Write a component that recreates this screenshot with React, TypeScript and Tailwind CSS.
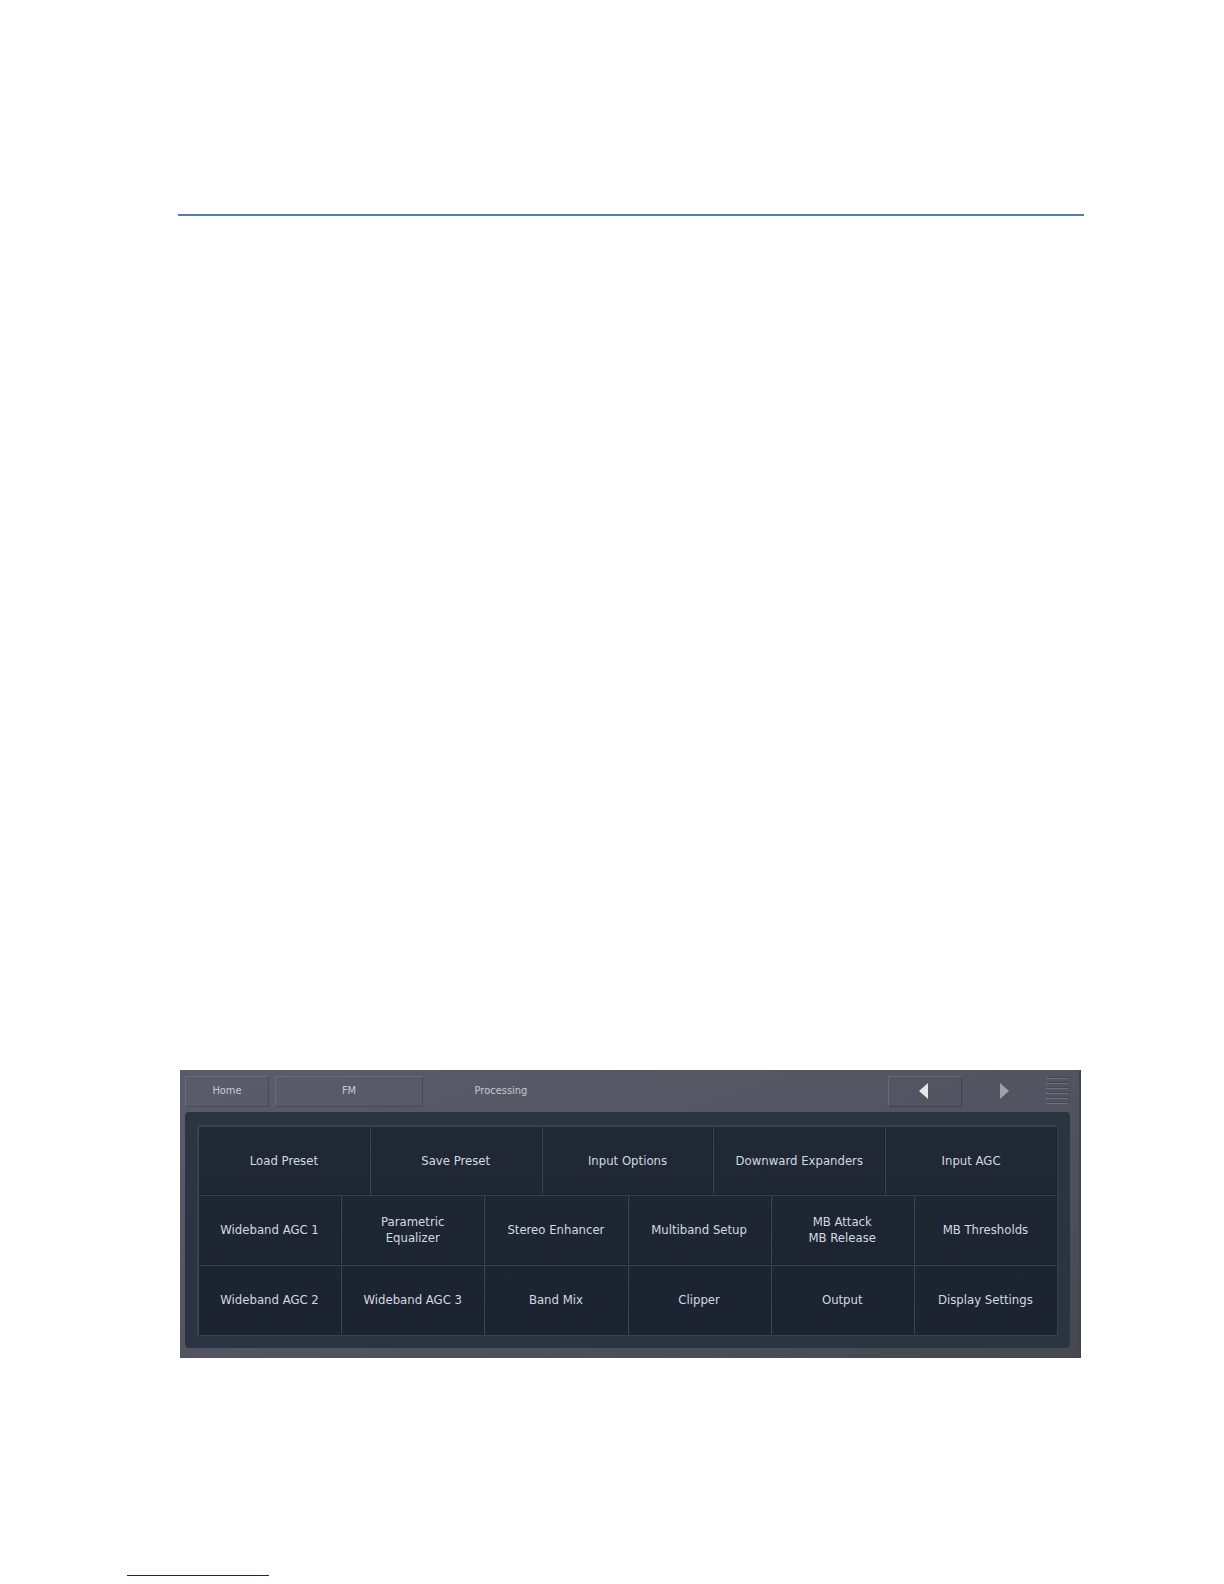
const presetRow = ['Load Preset', 'Save Preset', 'Input Options', 'Downward Expanders', 'Input AGC']

const stageRows = [
  ['Wideband AGC 1', 'Parametric\nEqualizer', 'Stereo Enhancer', 'Multiband Setup', 'MB Attack\nMB Release', 'MB Thresholds'],
  ['Wideband AGC 2', 'Wideband AGC 3', 'Band Mix', 'Clipper', 'Output', 'Display Settings'],
]

function Tile({ label }: { label: string }) {
  return (
    <button
      type="button"
      className="whitespace-pre-line border-t border-l border-t-[#36424f] border-l-[#3b4652] border-r border-b border-r-[#19222d] border-b-[#19222d] text-center text-[13px] leading-4 text-[#d3d9e0]"
    >
      {label}
    </button>
  )
}

function GripIcon() {
  return (
    <svg width="24" height="28" viewBox="0 0 24 28" aria-hidden="true">
      {[0, 5, 10, 15, 20, 25].map((y) => (
        <g key={y}>
          <path d={`M2 ${y + 0.5}H24`} stroke="#444651" />
          <path d={`M0 ${y + 1.5}H22`} stroke="#6e717b" />
        </g>
      ))}
    </svg>
  )
}

export default function App() {
  return (
    <div className="min-h-screen bg-white font-['DejaVu_Sans_Condensed','DejaVu_Sans',sans-serif]">
      <div className="pt-[214px] pr-[140px] pl-[178px]">
        <hr className="h-0.5 border-0 bg-[#4f7abb]" />

        <main className="mt-[854px] mr-[3px] ml-0.5 border-r-2 border-[#42444c] bg-linear-to-br from-[#5b5b6b] via-[#525461] to-[#46484f] pr-[9px] pb-[10px] pl-[5px]">
          {/* Breadcrumb bar */}
          <nav className="flex h-[42px] items-center text-[11px] leading-4 text-[#c8cad2]">
            <button type="button" className="h-[31px] w-[84px] border border-t-[#6a6b79] border-r-[#474955] border-b-[#474955] border-l-[#6a6b79]">
              Home
            </button>
            <button type="button" className="ml-1.5 h-[31px] w-[148px] border border-t-[#6a6b79] border-r-[#474955] border-b-[#474955] border-l-[#6a6b79]">
              FM
            </button>
            <span className="ml-1 w-[148px] text-center" aria-current="page">Processing</span>
            <button
              type="button"
              aria-label="Back"
              className="ml-auto flex h-[31px] w-[74px] items-center justify-center border border-t-[#676975] border-r-[#3f414d] border-b-[#3f414d] border-l-[#676975] pr-1"
            >
              <svg width="9" height="16" viewBox="0 0 9 16">
                <path d="M9 0V16L0 8Z" fill="#e4e5e8" />
              </svg>
            </button>
            <button type="button" aria-label="Forward" className="flex h-[31px] w-[84px] items-center justify-center">
              <svg width="9" height="16" viewBox="0 0 9 16">
                <path d="M0 0V16L9 8Z" fill="#a0a2aa" />
              </svg>
            </button>
            <button type="button" aria-label="Menu">
              <GripIcon />
            </button>
          </nav>

          {/* Processing stages */}
          <div className="rounded-sm bg-[#2b3542] px-3 pt-[13px] pb-3">
            <div className="border border-[#35414e] bg-linear-to-b from-[#202935] to-[#1b2230]">
              <div className="grid h-[69px] grid-cols-5">
                {presetRow.map((label) => (
                  <Tile key={label} label={label} />
                ))}
              </div>
              {stageRows.map((row, i) => (
                <div key={i} className="grid h-[70px] grid-cols-6">
                  {row.map((label) => (
                    <Tile key={label} label={label} />
                  ))}
                </div>
              ))}
            </div>
          </div>
        </main>
      </div>

      {/* Footer rule */}
      <hr className="mt-[217px] ml-[127px] h-px w-[142px] border-0 bg-[#1a1a80]" />
    </div>
  )
}
